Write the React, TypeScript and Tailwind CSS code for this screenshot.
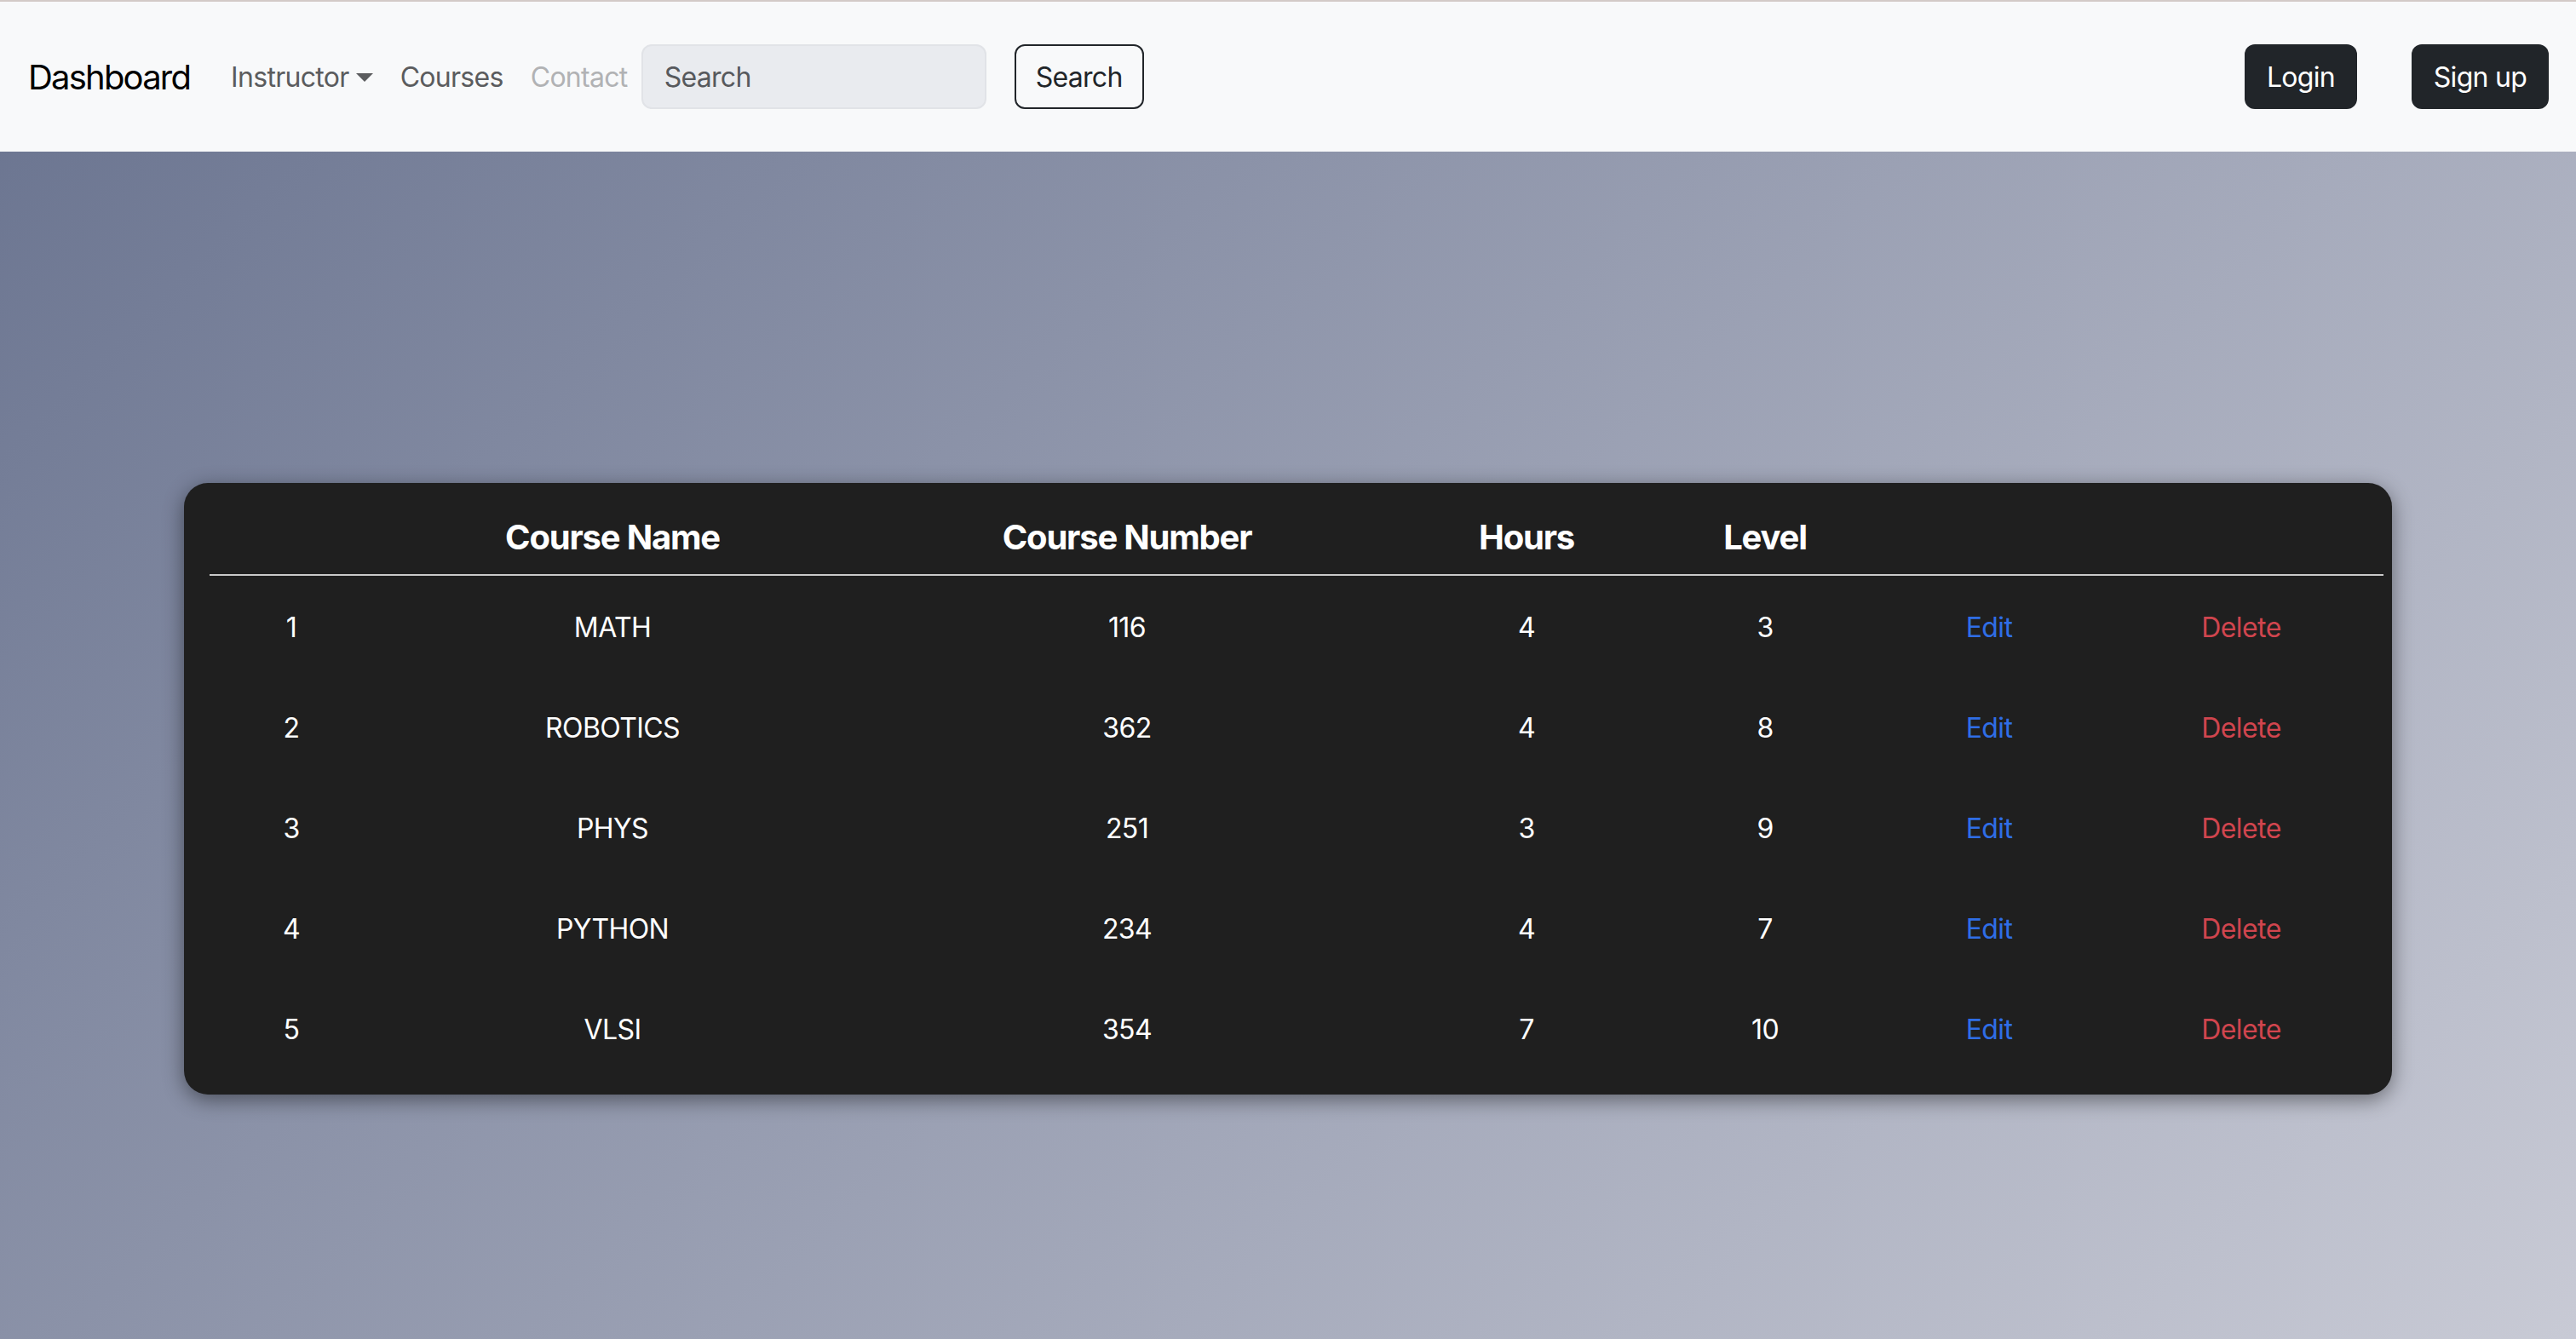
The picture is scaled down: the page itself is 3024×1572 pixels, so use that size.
const courses = [
	{ id: 1, name: 'MATH', number: 116, hours: 4, level: 3 },
	{ id: 2, name: 'ROBOTICS', number: 362, hours: 4, level: 8 },
	{ id: 3, name: 'PHYS', number: 251, hours: 3, level: 9 },
	{ id: 4, name: 'PYTHON', number: 234, hours: 4, level: 7 },
	{ id: 5, name: 'VLSI', number: 354, hours: 7, level: 10 },
];

const cols = 'grid grid-cols-[192px_562px_646px_292px_268px_258px_334px] items-center text-center';

const Navbar = () => (
	<nav className="flex h-[178px] items-center border-t-2 border-[#d3cac7] bg-[#f8f9fa] pl-[33px] pr-[32px] text-[32px] tracking-[-0.7px]">
		<a className="mr-[32px] pt-[2px] text-[40px] tracking-[-1.8px] text-black">Dashboard</a>
		<a className="flex items-center px-4 pt-[2px] text-[#5b5c5e]">
			Instructor
			<span className="ml-[8px] h-0 w-0 border-x-[10px] border-t-[10px] border-x-transparent border-t-[#5b5c5e]" />
		</a>
		<a className="px-4 pt-[2px] text-[#5b5c5e]">Courses</a>
		<a className="px-4 pt-[2px] text-[#b1b2b4]">Contact</a>
		<div className="flex h-[76px] w-[405px] items-center rounded-[12px] border-2 border-[#e1e3e7] bg-[#e9ebef] px-[25px] pt-[2px] text-[#57595d]">
			Search
		</div>
		<button className="ml-[33px] flex h-[76px] w-[152px] items-center justify-center rounded-[12px] border-2 border-[#212529] pt-[2px] text-[#212529]">
			Search
		</button>
		<div className="ml-auto flex gap-[64px]">
			<button className="flex h-[76px] w-[132px] items-center justify-center rounded-[12px] bg-[#212529] pt-[2px] text-white">
				Login
			</button>
			<button className="flex h-[76px] w-[161px] items-center justify-center rounded-[12px] bg-[#212529] pt-[2px] text-white">
				Sign up
			</button>
		</div>
	</nav>
);

export default function App() {
	return (
		<div className="min-h-screen bg-[linear-gradient(135deg,#69738f,#c8cad5)] font-['Inter',sans-serif]">
			<Navbar />
			<div className="mx-[216px] mt-[389px] rounded-[28px] bg-[#1f1f1f] pb-[19px] pl-[30px] pr-[10px] pt-[20px] shadow-[0_6px_24px_rgba(0,0,0,0.45)]">
				<div className={`${cols} h-[89px] border-b-2 border-[#c9c9c9] text-[40px] font-bold tracking-[-1.2px] text-white`}>
					<span />
					<span>Course Name</span>
					<span>Course Number</span>
					<span>Hours</span>
					<span>Level</span>
					<span />
					<span />
				</div>
				{courses.map((c) => (
					<div key={c.id} className={`${cols} h-[118px] pt-[3px] text-[32px] tracking-[-0.6px] text-white`}>
						<span>{c.id}</span>
						<span>{c.name}</span>
						<span>{c.number}</span>
						<span>{c.hours}</span>
						<span>{c.level}</span>
						<a className="text-[#2f6ee6]">Edit</a>
						<a className="text-[#d0454e]">Delete</a>
					</div>
				))}
			</div>
		</div>
	);
}
